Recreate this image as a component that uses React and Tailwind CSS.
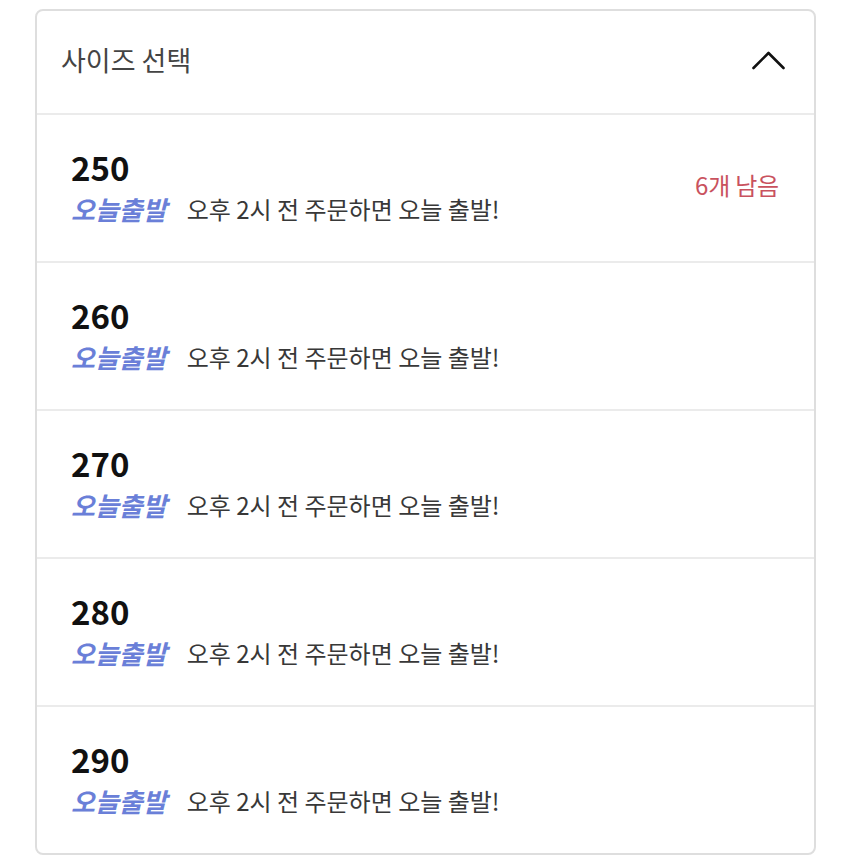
const sizes = [
    { size: 250, stock: "6개 남음" },
    { size: 260 },
    { size: 270 },
    { size: 280 },
    { size: 290 },
];

function ChevronUp() {
    return (
        <svg width="33" height="19" viewBox="0 0 33 19" fill="none" className="mb-[4px]">
            <polyline points="1.5,17 16.5,2 31.5,17" stroke="#111" strokeWidth="2.6" strokeLinecap="round" strokeLinejoin="round" />
        </svg>
    );
}

function SizeRow({ size, stock }) {
    return (
        <button
            type="button"
            className="flex h-[148px] w-full items-center justify-between border-t-2 border-[#ebebeb] pb-[6px] pl-[34px] pr-[35px] text-left"
        >
            <div className="flex flex-col">
                <span className="text-[33px] font-bold leading-[40px] text-[#111]">{size}</span>
                <div className="mt-[7px] flex items-center leading-[30px]">
                    <span className="text-[26px] font-bold italic text-[#6a7fd8]">오늘출발</span>
                    <span className="ml-[20px] text-[24px] text-[#383838]">오후 2시 전 주문하면 오늘 출발!</span>
                </div>
            </div>
            {stock ? <span className="text-[24px] tracking-[-0.2px] text-[#c9525e]">{stock}</span> : null}
        </button>
    );
}

export default function App() {
    return (
        <div
            className="min-h-[862px] bg-white pl-[35px] pt-[9px]"
            style={{ fontFamily: '"Noto Sans CJK KR", "Noto Sans", sans-serif' }}
        >
            <div className="w-[781px] overflow-hidden rounded-[8px] border-2 border-[#dedede] bg-white">
                <div className="flex h-[102px] items-center justify-between pl-[24px] pr-[29px]">
                    <span className="mb-[3px] text-[27px] text-[#444]">사이즈 선택</span>
                    <ChevronUp />
                </div>
                {sizes.map((s) => (
                    <SizeRow key={s.size} {...s} />
                ))}
            </div>
        </div>
    );
}
